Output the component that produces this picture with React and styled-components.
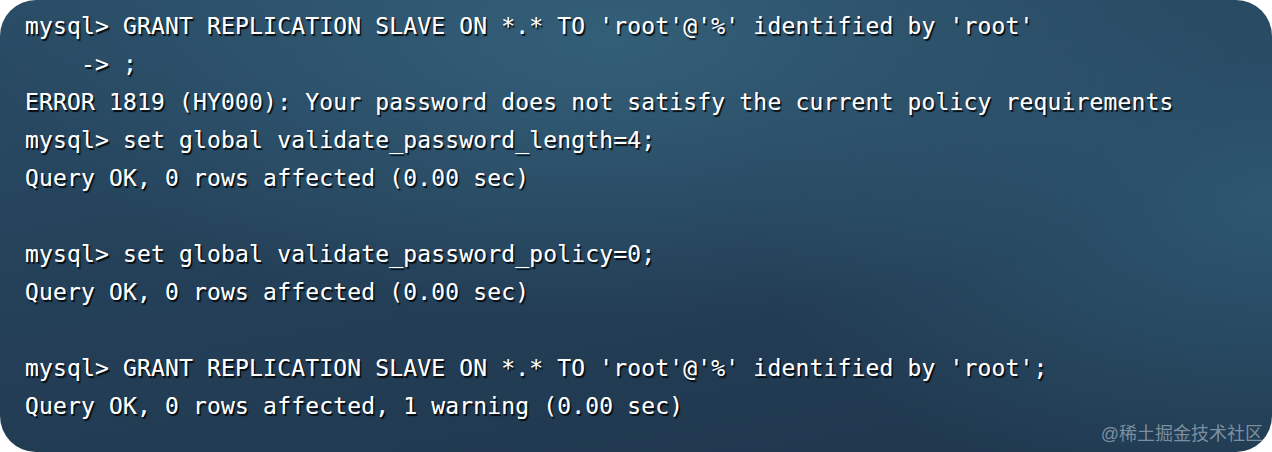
import React from "react";
import styled, { createGlobalStyle } from "styled-components";

const Global = createGlobalStyle`
  html, body { margin: 0; padding: 0; background: #ffffff; }
  #root { width: 1272px; height: 452px; }
`;

const Terminal = styled.div`
  position: relative;
  box-sizing: border-box;
  width: 1272px;
  height: 452px;
  border-radius: 36px;
  overflow: hidden;
  padding: 7px 0 0 25px;
  background:
    radial-gradient(ellipse 70% 90% at 48% 8%, rgba(52, 96, 122, 0.95) 0%, rgba(52, 96, 122, 0) 70%),
    radial-gradient(ellipse 55% 90% at 100% 45%, rgba(46, 88, 114, 0.95) 0%, rgba(46, 88, 114, 0) 75%),
    linear-gradient(170deg, #2a4c66 0%, #233e56 55%, #1f374d 100%);
`;

const Output = styled.pre`
  margin: 0;
  font-family: "DejaVu Sans Mono", "Liberation Mono", monospace;
  font-size: 23px;
  letter-spacing: 0.16px;
  line-height: 38px;
  color: #ffffff;
  white-space: pre;
  text-shadow: 1.5px 1.5px 1px rgba(0, 0, 0, 0.85), 0 0 0.4px rgba(255, 255, 255, 0.6);
`;

const Watermark = styled.span`
  position: absolute;
  right: 9px;
  bottom: 7px;
  font-family: "Liberation Sans", "Noto Sans CJK SC", sans-serif;
  font-size: 18px;
  color: rgba(165, 180, 194, 0.7);
`;

const lines = [
  "mysql> GRANT REPLICATION SLAVE ON *.* TO 'root'@'%' identified by 'root'",
  "    -> ;",
  "ERROR 1819 (HY000): Your password does not satisfy the current policy requirements",
  "mysql> set global validate_password_length=4;",
  "Query OK, 0 rows affected (0.00 sec)",
  "",
  "mysql> set global validate_password_policy=0;",
  "Query OK, 0 rows affected (0.00 sec)",
  "",
  "mysql> GRANT REPLICATION SLAVE ON *.* TO 'root'@'%' identified by 'root';",
  "Query OK, 0 rows affected, 1 warning (0.00 sec)",
];

export default function App() {
  return (
    <>
      <Global />
      <Terminal>
        <Output>{lines.join("\n")}</Output>
        <Watermark>@稀土掘金技术社区</Watermark>
      </Terminal>
    </>
  );
}
